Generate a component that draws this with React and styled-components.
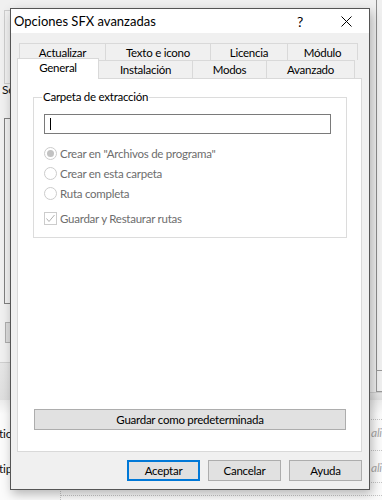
import styled, { createGlobalStyle } from "styled-components";

const GlobalStyle = createGlobalStyle`
  html, body { margin: 0; padding: 0; }
  body { background: #f0f0f0; font-family: Lato, "Noto Sans", sans-serif; }
  * { box-sizing: border-box; }
`;

const Desktop = styled.div`
  position: relative;
  width: 382px;
  height: 500px;
  overflow: hidden;
  background: #f0f0f0;
  font-size: 11.5px;
  letter-spacing: -0.25px;
  color: #000;
`;

/* slivers of the window behind the dialog */
const Back = styled.div`
  position: absolute;
  left: ${p => p.x}px;
  top: ${p => p.y}px;
  width: ${p => p.w}px;
  height: ${p => p.h}px;
`;
const BackFrame = styled(Back)`
  border: 1px solid ${p => p.c || "#cdcdcd"};
  background: ${p => p.bg || "transparent"};
`;
const BackBand = styled(Back)`
  border-top: 1px solid #cfcfcf;
  background: linear-gradient(#e6e6e6, #dedede);
`;
const BackPane = styled(Back)`
  background: linear-gradient(#ececec, #fbfbfb 14px, #fbfbfb);
`;
const BackRule = styled(Back)`
  border-top: 1px dotted #c4c4c4;
`;
const BackVRule = styled(Back)`
  border-left: 1px ${p => p.dotted ? "dotted #c4c4c4" : "solid #8c8c8c"};
`;
const BackText = styled.div`
  position: absolute;
  left: ${p => p.x}px;
  top: ${p => p.y}px;
  white-space: nowrap;
  font-size: 12px;
  line-height: 14px;
  color: ${p => p.muted ? "#a8a8a8" : "#111"};
  font-style: ${p => p.muted ? "italic" : "normal"};
`;

const Dialog = styled.div`
  position: absolute;
  left: 10px;
  top: 8px;
  width: 360px;
  height: 482px;
  border: 1px solid #555;
  background: #f0f0f0;
  box-shadow: 2px 4px 10px rgba(0, 0, 0, 0.28);
  display: flex;
  flex-direction: column;
`;

const TitleBar = styled.div`
  height: 24px;
  background: #fff;
  display: flex;
  align-items: center;
  flex-shrink: 0;
`;
const Title = styled.div`
  flex: 1;
  padding-left: 3px;
  font-size: 13px;
  letter-spacing: 0;
`;
const TitleButton = styled.div`
  width: 46px;
  height: 24px;
  display: flex;
  align-items: center;
  justify-content: center;
  font-size: 14px;
`;

const Body = styled.div`
  flex: 1;
  display: flex;
  flex-direction: column;
  padding: 10px 7px 8px 6px;
`;

const TabRow = styled.div`
  display: flex;
  margin-left: 2px;
  height: ${p => p.h}px;
  position: relative;
`;
const Tab = styled.div`
  width: ${p => p.w}px;
  height: 100%;
  border-top: 1px solid #d9d9d9;
  border-left: 1px solid #d9d9d9;
  ${p => p.last && "border-right: 1px solid #d9d9d9;"}
  background: #f0f0f0;
  display: flex;
  align-items: center;
  justify-content: center;
  padding-top: 1px;
  line-height: 14px;
  white-space: nowrap;
  ${p => p.active && `
    position: relative;
    z-index: 2;
    background: #fff;
    border-right: 1px solid #d9d9d9;
    margin: -2px -1px 0 -2px;
    height: calc(100% + 3px);
    padding: 0 0 3px 0;
  `}
`;

const Panel = styled.div`
  height: 374px;
  border: 1px solid #d9d9d9;
  background: #fff;
  display: flex;
  flex-direction: column;
`;

const GroupBox = styled.div`
  position: relative;
  margin: 18px 0 0 15px;
  width: 314px;
  height: 141px;
  border: 1px solid #dcdcdc;
  padding: 16px 0 0 10px;
`;
const Legend = styled.span`
  position: absolute;
  left: 8px;
  top: -9px;
  padding: 0 1px;
  background: #fff;
  line-height: 16px;
`;
const PathInput = styled.div`
  width: 287px;
  height: 20px;
  border: 1px solid #7a7a7a;
  display: flex;
  align-items: center;
  padding-left: 5px;
`;
const Caret = styled.div`
  width: 1px;
  height: 12px;
  background: #000;
`;
const Options = styled.div`
  display: flex;
  flex-direction: column;
  margin-top: 9px;
`;
const Option = styled.div`
  height: 20px;
  display: flex;
  align-items: center;
  gap: 3px;
  color: #6d6d6d;
  margin-top: ${p => p.gap || 0}px;
`;
const Radio = styled.span`
  width: 13px;
  height: 13px;
  border-radius: 50%;
  border: 1px solid #cccccc;
  background: #fff;
  display: flex;
  align-items: center;
  justify-content: center;
  &::after {
    content: "";
    display: ${p => p.checked ? "block" : "none"};
    width: 7px;
    height: 7px;
    border-radius: 50%;
    background: #c2c2c2;
  }
`;
const Check = styled.span`
  width: 13px;
  height: 13px;
  border: 1px solid #cccccc;
  background: #fff;
  display: flex;
  align-items: center;
  justify-content: center;
`;

const Button = styled.div`
  height: 21px;
  width: ${p => p.w}px;
  background: #e1e1e1;
  border: ${p => p.primary ? "2px solid #0078d7" : "1px solid #adadad"};
  display: flex;
  align-items: center;
  justify-content: center;
  white-space: nowrap;
`;
const DefaultButton = styled(Button)`
  margin: auto 0 21px 16px;
`;
const Footer = styled.div`
  display: flex;
  justify-content: flex-end;
  gap: 8px;
  margin-top: 8px;
`;

const row1 = [["Actualizar", 86], ["Texto e icono", 105], ["Licencia", 77], ["Módulo", 71]];
const row2 = [["General", 82], ["Instalación", 94], ["Modos", 74], ["Avanzado", 89]];

export default function App() {
  return (
    <Desktop>
      <GlobalStyle />
      <BackFrame x={4} y={10} w={30} h={74} />
      <BackText x={2} y={83}>Sección</BackText>
      <BackFrame x={4} y={118} w={30} h={186} c="#7f7f7f" />
      <BackFrame x={5} y={322} w={30} h={21} c="#adadad" bg="#dcdcdc" />
      <BackBand x={0} y={362} w={20} h={38} />
      <BackBand x={360} y={392} w={22} h={8} />
      <BackPane x={0} y={400} w={382} h={100} />
      <BackText x={-1} y={427}>ticket</BackText>
      <BackText x={-1} y={462}>tipo</BackText>
      <BackRule x={360} y={419} w={22} h={1} />
      <BackRule x={360} y={450} w={22} h={1} />
      <BackRule x={360} y={482} w={22} h={1} />
      <BackText x={371} y={426} muted>ali</BackText>
      <BackText x={371} y={461} muted>ali</BackText>
      <BackRule x={60} y={495} w={322} h={1} />
      <BackVRule x={60} y={488} w={1} h={12} dotted />
      <BackVRule x={376} y={0} w={1} h={392} />
      <BackFrame x={376} y={370} w={10} h={22} c="#9a9a9a" />

      <Dialog>
        <TitleBar>
          <Title>Opciones SFX avanzadas</Title>
          <TitleButton>?</TitleButton>
          <TitleButton>
            <svg width="11" height="11" viewBox="0 0 11 11">
              <path d="M0.5 0.5 L10.5 10.5 M10.5 0.5 L0.5 10.5" stroke="#000" strokeWidth="1" fill="none" />
            </svg>
          </TitleButton>
        </TitleBar>
        <Body>
          <TabRow h={17}>
            {row1.map(([label, w], i) => (
              <Tab key={label} w={w} last={i === row1.length - 1}>{label}</Tab>
            ))}
          </TabRow>
          <TabRow h={18}>
            {row2.map(([label, w], i) => (
              <Tab key={label} w={w} active={i === 0} last={i === row2.length - 1}>{label}</Tab>
            ))}
          </TabRow>
          <Panel>
            <GroupBox>
              <Legend>Carpeta de extracción</Legend>
              <PathInput><Caret /></PathInput>
              <Options>
                <Option><Radio checked />Crear en "Archivos de programa"</Option>
                <Option><Radio />Crear en esta carpeta</Option>
                <Option><Radio />Ruta completa</Option>
                <Option gap={5}>
                  <Check>
                    <svg width="11" height="11" viewBox="0 0 11 11">
                      <path d="M1.5 5.5 L4 8.5 L9.5 2" stroke="#b0b0b0" strokeWidth="1" fill="none" />
                    </svg>
                  </Check>
                  Guardar y Restaurar rutas
                </Option>
              </Options>
            </GroupBox>
            <DefaultButton w={312}>Guardar como predeterminada</DefaultButton>
          </Panel>
          <Footer>
            <Button w={73} primary>Aceptar</Button>
            <Button w={73}>Cancelar</Button>
            <Button w={73}>Ayuda</Button>
          </Footer>
        </Body>
      </Dialog>
    </Desktop>
  );
}
